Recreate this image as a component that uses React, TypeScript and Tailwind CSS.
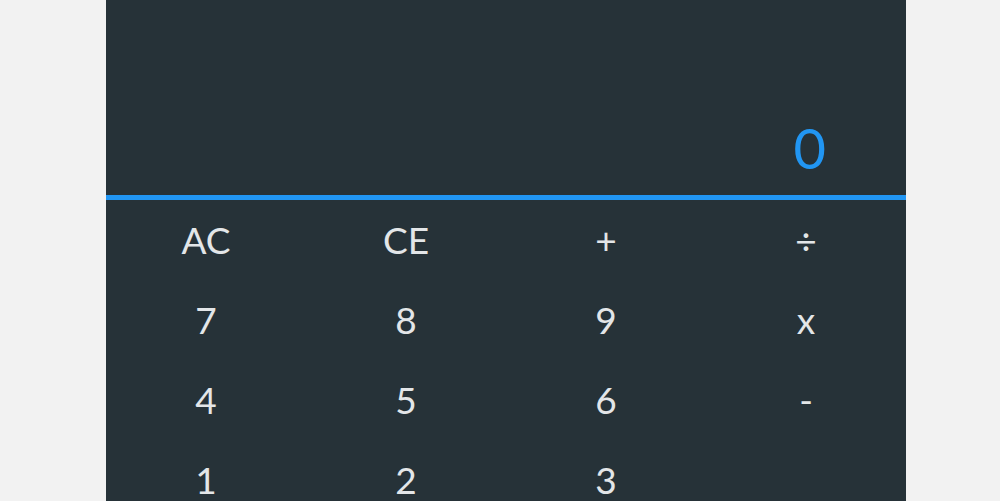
import React from "react";

const keys = ["AC", "CE", "+", "÷", "7", "8", "9", "x", "4", "5", "6", "-", "1", "2", "3", ""];

export default function App() {
  return (
    <div className="min-h-screen bg-[#f2f2f2] flex justify-center pl-3" style={{ fontFamily: "Lato, 'Open Sans', sans-serif" }}>
      <div className="w-[800px] bg-[#263238] overflow-hidden h-[501px]">
        <div className="h-[195px] flex items-end justify-end pr-[80px] pb-[19px]">
          <span className="text-[#2196f3] text-[56px] font-normal leading-none">0</span>
        </div>
        <div className="h-[5px] bg-[#2196f3]" />
        <div className="grid grid-cols-4">
          {keys.map((k, i) => (
            <div key={i} className="h-20 flex items-center justify-center text-[#e3e6e8] text-[37px] font-normal">
              {k}
            </div>
          ))}
        </div>
      </div>
    </div>
  );
}
